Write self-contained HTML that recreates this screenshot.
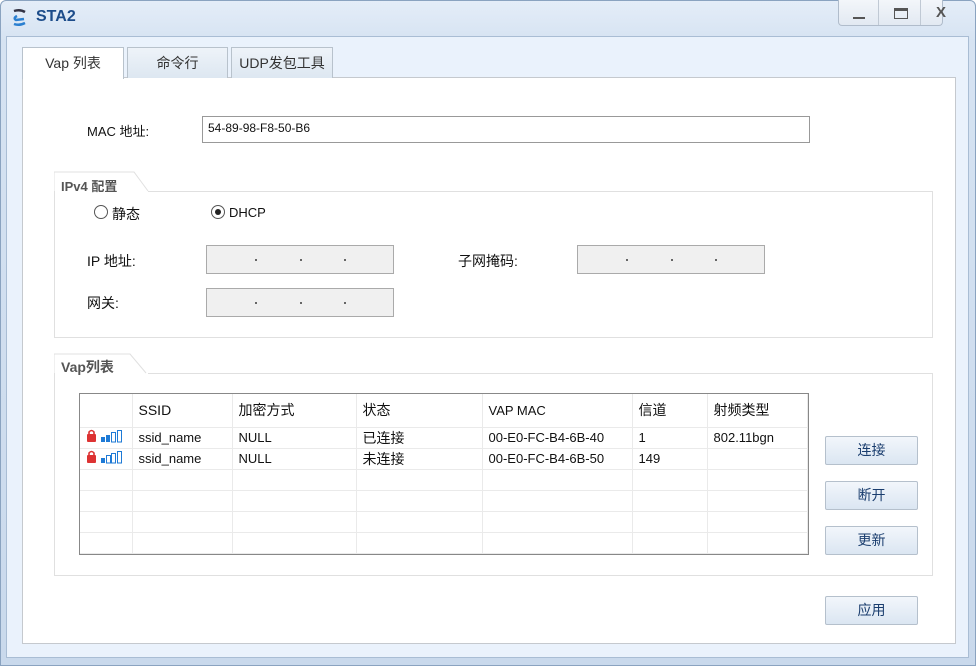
<!DOCTYPE html>
<html><head><meta charset="utf-8"><style>
*{box-sizing:border-box;margin:0;padding:0}
body{width:976px;height:666px;overflow:hidden;background:#fff;font-family:"Liberation Sans","Noto Sans CJK SC",sans-serif;font-size:13px;color:#111;position:relative}
.a{position:absolute}
.frame{left:0;top:0;width:976px;height:666px;background:linear-gradient(#e4edf8,#d6e3f2 40px,#c9d9ec);border:1px solid #8aa3c0;border-radius:6px 6px 0 0}
.client{left:6px;top:36px;width:963px;height:622px;background:#eaf2fc;border:1px solid #a9bdd4}
.panel{left:22px;top:77px;width:934px;height:567px;background:#fff;border:1px solid #c5c9ce}
.tab{top:47px;height:31px;border:1px solid #b8c2cc;border-bottom:none;background:linear-gradient(#eef3f9,#dde7f1);text-align:center;line-height:30px;font-size:14px;color:#333}
.grp{border:1px solid #e0e0e0;border-top:none}
.gl{height:1px;background:#e0e0e0}
.inp{border:1px solid #aaa;background:#f0f0f0}
.btn{left:825px;width:93px;height:29px;border:1px solid #b5c0cc;border-radius:2px;background:linear-gradient(#f2f6fb,#dbe6f2);text-align:center;line-height:27px;font-size:14px;color:#1a3d6e}
.dot{position:absolute;top:13px;width:2px;height:2px;background:#666}
table{border-collapse:collapse;font-size:13px}
td{border-right:1px solid #eaeaea;border-bottom:1px solid #eaeaea;padding:0 0 0 6px;white-space:nowrap}
</style></head><body>
<div class="a frame"></div>
<svg class="a" style="left:10px;top:8px" width="20" height="20" viewBox="0 0 20 20"><path d="M4 3 Q10 1 15 4" stroke="#334" stroke-width="2.5" fill="none"/><path d="M7 8 Q3 10 6 12 L14 11" stroke="#2a7fd0" stroke-width="2.5" fill="none"/><path d="M4 16 Q9 18 15 15" stroke="#2a7fd0" stroke-width="2.5" fill="none"/></svg>
<div class="a" style="left:36px;top:8px;font-size:16px;font-weight:bold;color:#1c4c8a">STA2</div>
<div class="a" style="left:838px;top:0;width:105px;height:26px;border:1px solid #b0bccb;border-top:none;border-radius:0 0 4px 4px;background:linear-gradient(#f3f6fa,#e2e9f2)"></div>
<div class="a" style="left:878px;top:0;width:1px;height:25px;background:#c0c9d4"></div>
<div class="a" style="left:920px;top:0;width:1px;height:25px;background:#c0c9d4"></div>
<div class="a" style="left:853px;top:17px;width:12px;height:2px;background:#555"></div>
<div class="a" style="left:894px;top:8px;width:14px;height:11px;border:1.5px solid #555;border-top-width:3px"></div>
<div class="a" style="left:936px;top:4px;font-size:15px;font-weight:bold;color:#555">X</div>
<div class="a client"></div>
<div class="a panel"></div>
<div class="a tab" style="left:22px;width:102px;background:#fff;height:32px">Vap 列表</div>
<div class="a tab" style="left:127px;width:101px">命令行</div>
<div class="a tab" style="left:231px;width:102px">UDP发包工具</div>

<div class="a" style="left:87px;top:121px">MAC 地址:</div>
<div class="a" style="left:202px;top:116px;width:608px;height:27px;border:1px solid #999;background:#fff;padding:4px 5px;font-size:12px">54-89-98-F8-50-B6</div>

<div class="a grp" style="left:54px;top:191px;width:879px;height:147px"></div>
<div class="a gl" style="left:148px;top:191px;width:785px"></div>
<svg class="a" style="left:54px;top:171px" width="96" height="22"><path d="M0 21 V1 H80 L94 20" stroke="#e0e0e0" fill="none"/></svg>
<div class="a" style="left:61px;top:176px;font-size:13px;font-weight:bold;color:#555">IPv4 配置</div>
<div class="a" style="left:94px;top:205px;width:14px;height:14px;border:1px solid #555;border-radius:50%"></div>
<div class="a" style="left:112px;top:204px;font-size:14px">静态</div>
<div class="a" style="left:211px;top:205px;width:14px;height:14px;border:1px solid #555;border-radius:50%"></div>
<div class="a" style="left:215px;top:209px;width:6px;height:6px;background:#222;border-radius:50%"></div>
<div class="a" style="left:229px;top:205px;font-size:13px">DHCP</div>
<div class="a" style="left:87px;top:251px;font-size:14px">IP 地址:</div>
<div class="a inp" style="left:206px;top:245px;width:188px;height:29px"><i class="dot" style="left:48px"></i><i class="dot" style="left:93px"></i><i class="dot" style="left:137px"></i></div>
<div class="a" style="left:458px;top:251px;font-size:14px">子网掩码:</div>
<div class="a inp" style="left:577px;top:245px;width:188px;height:29px"><i class="dot" style="left:48px"></i><i class="dot" style="left:93px"></i><i class="dot" style="left:137px"></i></div>
<div class="a" style="left:87px;top:293px;font-size:14px">网关:</div>
<div class="a inp" style="left:206px;top:288px;width:188px;height:29px"><i class="dot" style="left:48px"></i><i class="dot" style="left:93px"></i><i class="dot" style="left:137px"></i></div>

<div class="a grp" style="left:54px;top:373px;width:879px;height:203px"></div>
<div class="a gl" style="left:148px;top:373px;width:785px"></div>
<svg class="a" style="left:54px;top:353px" width="96" height="22"><path d="M0 21 V1 H76 L92 20" stroke="#e0e0e0" fill="none"/></svg>
<div class="a" style="left:61px;top:357px;font-size:14px;font-weight:bold;color:#555">Vap列表</div>

<div class="a" style="left:79px;top:393px;width:730px;height:162px;border:1px solid #888;background:#fff;overflow:hidden">
<table>
<tr style="height:33px;font-size:14px"><td style="width:52px"></td><td style="width:100px">SSID</td><td style="width:124px">加密方式</td><td style="width:126px">状态</td><td style="width:150px;font-size:13px">VAP MAC</td><td style="width:75px">信道</td><td style="width:100px">射频类型</td></tr>
<tr style="height:21px"><td style="padding-left:6px"><svg width="44" height="14"><rect x="1" y="5" width="9" height="8" rx="1" fill="#d33"/><path d="M3 6 V3 Q5.5 0 8 3 V6" stroke="#d33" stroke-width="1.6" fill="none"/><rect x="15" y="8" width="4" height="5" fill="#1e7ad6"/><rect x="20" y="6" width="4" height="7" fill="#1e7ad6"/><rect x="25.5" y="3.5" width="4" height="9.5" fill="none" stroke="#1e7ad6"/><rect x="31.5" y="1.5" width="4" height="11.5" fill="none" stroke="#1e7ad6"/></svg></td><td>ssid_name</td><td>NULL</td><td style="font-size:14px">已连接</td><td>00-E0-FC-B4-6B-40</td><td>1</td><td>802.11bgn</td></tr>
<tr style="height:21px"><td style="padding-left:6px"><svg width="44" height="14"><rect x="1" y="5" width="9" height="8" rx="1" fill="#d33"/><path d="M3 6 V3 Q5.5 0 8 3 V6" stroke="#d33" stroke-width="1.6" fill="none"/><rect x="15" y="8" width="4" height="5" fill="#1e7ad6"/><rect x="20.5" y="5.5" width="4" height="7.5" fill="none" stroke="#1e7ad6"/><rect x="25.5" y="3.5" width="4" height="9.5" fill="none" stroke="#1e7ad6"/><rect x="31.5" y="1.5" width="4" height="11.5" fill="none" stroke="#1e7ad6"/></svg></td><td>ssid_name</td><td>NULL</td><td style="font-size:14px">未连接</td><td>00-E0-FC-B4-6B-50</td><td>149</td><td></td></tr>
<tr style="height:21px"><td></td><td></td><td></td><td></td><td></td><td></td><td></td></tr>
<tr style="height:21px"><td></td><td></td><td></td><td></td><td></td><td></td><td></td></tr>
<tr style="height:21px"><td></td><td></td><td></td><td></td><td></td><td></td><td></td></tr>
<tr style="height:21px"><td></td><td></td><td></td><td></td><td></td><td></td><td></td></tr>
</table></div>

<div class="a btn" style="top:436px">连接</div>
<div class="a btn" style="top:481px">断开</div>
<div class="a btn" style="top:526px">更新</div>
<div class="a btn" style="top:596px">应用</div>
</body></html>
